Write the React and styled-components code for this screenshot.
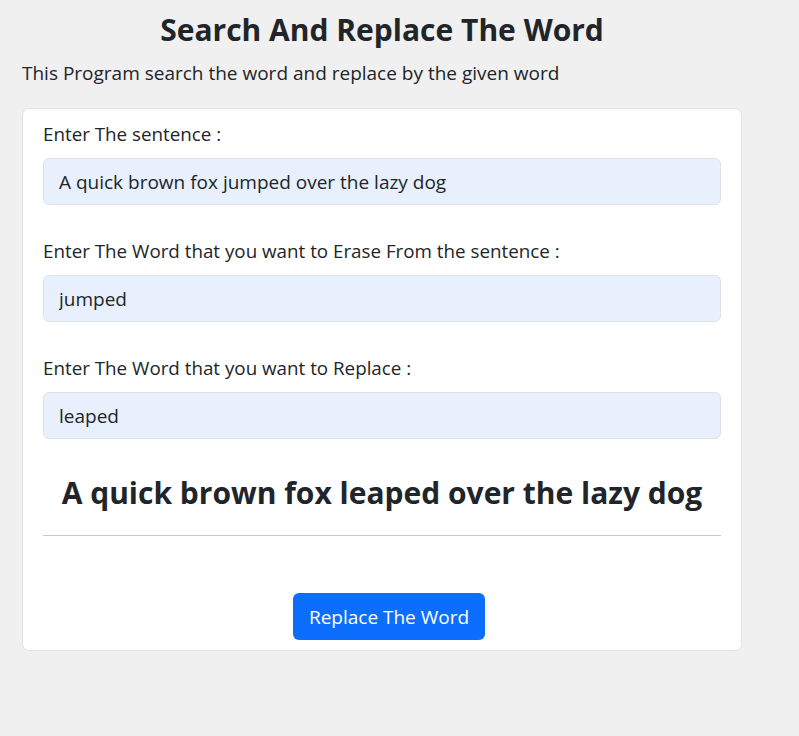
import React, { useState } from 'react';
import styled, { createGlobalStyle } from 'styled-components';

const GlobalStyle = createGlobalStyle`
  body {
    margin: 0;
    background: #f0f0f0;
    font-family: "Open Sans", "Noto Sans", sans-serif;
    color: #212529;
  }
`;

const Page = styled.div`
  width: 720px;
  margin-left: 22px;
  padding-top: 10px;
`;

const Title = styled.h1`
  margin: 0;
  text-align: center;
  font-size: 30px;
  font-weight: 700;
  line-height: 40px;
`;

const Subtitle = styled.p`
  margin: 10px 0 22px;
  font-size: 19px;
  line-height: 26px;
`;

const Card = styled.div`
  background: #fff;
  border: 1px solid #e2e2e2;
  border-radius: 7px;
  padding: 12px 20px 10px;
`;

const Label = styled.label`
  display: block;
  font-size: 18.8px;
  line-height: 27px;
  margin-bottom: 10px;
`;

const Field = styled.div`
  margin-bottom: 33px;
`;

const Input = styled.input`
  box-sizing: border-box;
  display: block;
  width: 100%;
  height: 47px;
  padding: 0 15px;
  font: inherit;
  font-size: 19px;
  color: #212529;
  background: #e8f0fe;
  border: 1px solid #dee2e6;
  border-radius: 6px;
  outline: none;
`;

const Result = styled.h2`
  margin: 3px 0 0;
  text-align: center;
  font-size: 30px;
  font-weight: 700;
  line-height: 41px;
`;

const Rule = styled.hr`
  margin: 22px 0 0;
  border: 0;
  border-top: 1px solid #c8c8c8;
`;

const Actions = styled.div`
  display: flex;
  justify-content: center;
  padding: 57px 0 0 14px;
`;

const Button = styled.button`
  height: 47px;
  padding: 0 16px;
  font: inherit;
  font-size: 19px;
  color: #fff;
  background: #0d6efd;
  border: 0;
  border-radius: 6px;
  cursor: pointer;
`;

export default function App() {
  const [sentence, setSentence] = useState('A quick brown fox jumped over the lazy dog');
  const [erase, setErase] = useState('jumped');
  const [replace, setReplace] = useState('leaped');
  const [result, setResult] = useState('A quick brown fox leaped over the lazy dog');

  const run = () => setResult(sentence.split(erase).join(replace));

  return (
    <>
      <GlobalStyle />
      <Page>
        <Title>Search And Replace The Word</Title>
        <Subtitle>This Program search the word and replace by the given word</Subtitle>
        <Card>
          <Field>
            <Label>Enter The sentence :</Label>
            <Input value={sentence} onChange={(e) => setSentence(e.target.value)} />
          </Field>
          <Field>
            <Label>Enter The Word that you want to Erase From the sentence :</Label>
            <Input value={erase} onChange={(e) => setErase(e.target.value)} />
          </Field>
          <Field>
            <Label>Enter The Word that you want to Replace :</Label>
            <Input value={replace} onChange={(e) => setReplace(e.target.value)} />
          </Field>
          <Result>{result}</Result>
          <Rule />
          <Actions>
            <Button onClick={run}>Replace The Word</Button>
          </Actions>
        </Card>
      </Page>
    </>
  );
}
